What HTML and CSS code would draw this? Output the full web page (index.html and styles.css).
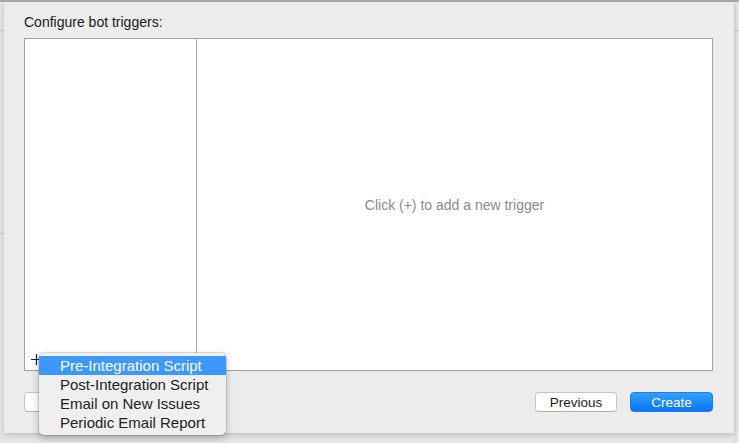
FILE: index.html
```html
<!DOCTYPE html>
<html>
<head>
<meta charset="utf-8">
<link rel="stylesheet" href="styles.css">
</head>
<body>
<div class="screen">
  <div class="sheet">
    <div class="title">Configure bot triggers:</div>
    <div class="box">
      <div class="list">
        <div class="list-foot">
          <svg class="plus" width="11" height="11" viewBox="0 0 11 11"><path d="M5.5 0V11M0 5.5H11" stroke="#222" stroke-width="1.2" fill="none"/></svg>
        </div>
      </div>
      <div class="detail">Click (+) to add a new trigger</div>
    </div>
    <div class="buttons">
      <button class="btn" aria-label="Cancel"></button>
      <div class="spacer"></div>
      <button class="btn">Previous</button>
      <button class="btn primary">Create</button>
    </div>
  </div>
  <div class="menu">
    <div class="item active">Pre-Integration Script</div>
    <div class="item">Post-Integration Script</div>
    <div class="item">Email on New Issues</div>
    <div class="item">Periodic Email Report</div>
  </div>
</div>
</body>
</html>
```
FILE: styles.css
```css
html, body {
  margin: 0;
  padding: 0;
}
body {
  width: 739px;
  height: 443px;
  overflow: hidden;
  font-family: "Liberation Sans", Arial, sans-serif;
  background:
    linear-gradient(#c9c9c9, #c9c9c9) 0 30px / 4px 1px no-repeat,
    linear-gradient(#c9c9c9, #c9c9c9) 0 233px / 4px 1px no-repeat,
    linear-gradient(#c9c9c9, #c9c9c9) 734px 30px / 5px 1px no-repeat,
    linear-gradient(to right, #dcdcdc, #ececec) 734px 0 / 5px 443px no-repeat,
    #e6e6e6;
}
.screen {
  position: relative;
  width: 739px;
  height: 443px;
  border-top: 2px solid #a9a9a9;
  box-sizing: border-box;
}
.sheet {
  margin-left: 4px;
  width: 730px;
  height: 431px;
  background: #ececec;
  box-shadow: 0 2px 6px rgba(0,0,0,0.18);
  box-sizing: border-box;
  padding: 12px 21px 0 20px;
  display: flex;
  flex-direction: column;
}
.title {
  font-size: 14px;
  line-height: 17px;
  color: #1a1a1a;
  height: 17px;
}
.box {
  margin-top: 7px;
  height: 333px;
  border: 1px solid #a3a3a3;
  background: #fff;
  box-sizing: border-box;
  display: flex;
}
.list {
  width: 171px;
  border-right: 1px solid #a9a9a9;
  display: flex;
  flex-direction: column;
  justify-content: flex-end;
}
.list-foot {
  height: 16px;
  padding-left: 6px;
}
.plus {
  display: block;
}
.detail {
  flex: 1;
  display: flex;
  align-items: center;
  justify-content: center;
  font-size: 14px;
  color: #8a8a8a;
}
.buttons {
  margin-top: 21px;
  display: flex;
  gap: 13px;
  height: 20px;
}
.spacer { flex: 1; }
.btn {
  width: 82px;
  height: 20px;
  padding: 0;
  font-family: "Liberation Sans", Arial, sans-serif;
  font-size: 13.5px;
  color: #1a1a1a;
  background: #fff;
  border: 1px solid #c4c4c4;
  border-bottom-color: #b0b0b0;
  border-radius: 4px;
  box-sizing: border-box;
}
.btn.primary {
  width: 83px;
  color: #fff;
  border: 1px solid #1b7ef0;
  background: linear-gradient(#33a0fd, #0a74f7);
}
.menu {
  position: absolute;
  left: 39px;
  top: 351px;
  width: 187px;
  padding: 3px 0;
  background: #efefef;
  border-radius: 5px;
  box-shadow: 0 0 0 1px rgba(0,0,0,0.12), 0 3px 8px rgba(0,0,0,0.25);
  box-sizing: border-box;
}
.item {
  height: 19px;
  line-height: 19px;
  padding-left: 21px;
  font-size: 15px;
  color: #222;
}
.item.active {
  background: #3d98fc;
  color: #fff;
}
```
